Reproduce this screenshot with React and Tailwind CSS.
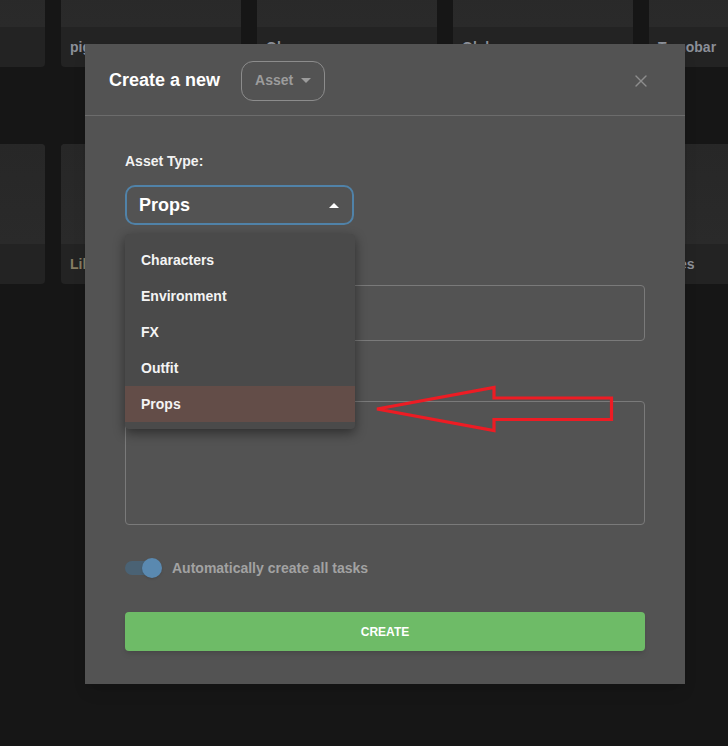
import { X } from "lucide-react";

const rows = [
  [
    { name: "", color: "text-[#8b8f98]" },
    { name: "pig", color: "text-[#8b8f98]" },
    { name: "Glass", color: "text-[#8b8f98]" },
    { name: "Globe", color: "text-[#8b8f98]" },
    { name: "Tamobar", color: "text-[#8b8f98]" },
  ],
  [
    { name: "", color: "text-[#8b8f98]" },
    { name: "Lily", color: "text-[#857c62]" },
    { name: "Rock", color: "text-[#8b8f98]" },
    { name: "Table", color: "text-[#8b8f98]" },
    { name: "Trees", color: "text-[#8b8f98]" },
  ],
];

const assetTypes = ["Characters", "Environment", "FX", "Outfit", "Props"];

function AssetCard({ name, color }) {
  return (
    <div className="w-[180px] shrink-0 overflow-hidden rounded-[4px] bg-[#232323]">
      <div className="h-[100px] bg-gradient-to-b from-[#272727] to-[#2a2a2a]" />
      <div className={`flex h-[40px] items-center px-[9px] text-[14px] font-bold ${color}`}>
        {name}
      </div>
    </div>
  );
}

export default function App() {
  return (
    <div className="relative h-[746px] w-[728px] overflow-hidden bg-[#161616] font-['Liberation_Sans',Arial,sans-serif]">
      {/* Asset grid behind the modal */}
      <div className="-ml-[135px] -mt-[73px] flex flex-col gap-[77px]">
        {rows.map((row, i) => (
          <div key={i} className="flex gap-4">
            {row.map((card, j) => (
              <AssetCard key={j} {...card} />
            ))}
          </div>
        ))}
      </div>

      {/* Modal */}
      <div className="absolute left-[85px] top-[44px] w-[600px] bg-[#535353] shadow-lg">
        <div className="flex h-[72px] items-center border-b border-[#6c6c6c] pl-6 pr-[34px] pt-[2px]">
          <h1 className="text-[18px] font-bold text-white">Create a new</h1>
          <button className="ml-[21px] flex h-[40px] w-[84px] items-center gap-[8px] rounded-[12px] border border-[#8c8c8c] pl-[13px] text-[14px] font-bold text-[#9c9c9c]">
            Asset
            <span className="h-0 w-0 border-x-[5px] border-t-[5px] border-x-transparent border-t-[#9c9c9c]" />
          </button>
          <X className="ml-auto text-[#8d8d8d]" size={20} strokeWidth={1.6} />
        </div>

        <div className="relative px-10 pb-[33px] pt-[35px]">
          <label className="block text-[14px] font-bold leading-5 text-[#f2f2f2]">Asset Type:</label>
          <div className="mt-[14px] flex h-[40px] w-[229px] items-center justify-between rounded-[10px] border-2 border-[#5082a8] pl-[12px] pr-[13px]">
            <span className="text-[18px] font-bold text-white">Props</span>
            <span className="h-0 w-0 border-x-[5px] border-b-[5px] border-x-transparent border-b-white" />
          </div>

          {/* name field (its label sits under the open menu) */}
          <div className="mt-[26px] h-5" />
          <div className="mt-[14px] h-[56px] rounded-[4px] border border-[#7a7a7a]" />

          {/* description field */}
          <div className="mt-[26px] h-5" />
          <div className="mt-[14px] h-[124px] rounded-[4px] border border-[#7a7a7a]" />

          <div className="mt-[31px] flex h-[24px] items-center">
            <div className="relative h-[14px] w-[34px] rounded-full bg-[#4a6274]">
              <span className="absolute -right-[3px] -top-[3px] h-[20px] w-[20px] rounded-full bg-[#5a89b0] shadow" />
            </div>
            <span className="ml-[13px] text-[14px] font-bold text-[#a2a2a2]">Automatically create all tasks</span>
          </div>

          <button className="mt-[32px] flex h-[39px] w-full items-center justify-center rounded-[4px] bg-[#6ebb67] text-[12px] font-bold text-white shadow-md">
            CREATE
          </button>

          {/* Open select menu */}
          <ul className="absolute left-10 top-[118px] w-[230px] rounded-[4px] bg-[#4a4a4a] pb-[7px] pt-[8px] shadow-[0_4px_12px_rgba(0,0,0,0.45)]">
            {assetTypes.map((type) => (
              <li
                key={type}
                className={`flex h-9 items-center px-4 text-[14px] font-bold text-[#f4f4f4] ${
                  type === "Props" ? "bg-[#634d48]" : ""
                }`}
              >
                {type}
              </li>
            ))}
          </ul>
        </div>
      </div>

      {/* Annotation arrow */}
      <svg className="pointer-events-none absolute left-0 top-0" width="728" height="746">
        <polygon
          points="377,409 494,387.5 494,398 611.5,398 611.5,419.5 494,419.5 494,430.5"
          fill="none"
          stroke="#ed1c24"
          strokeWidth="3.2"
          strokeLinejoin="miter"
        />
      </svg>
    </div>
  );
}
